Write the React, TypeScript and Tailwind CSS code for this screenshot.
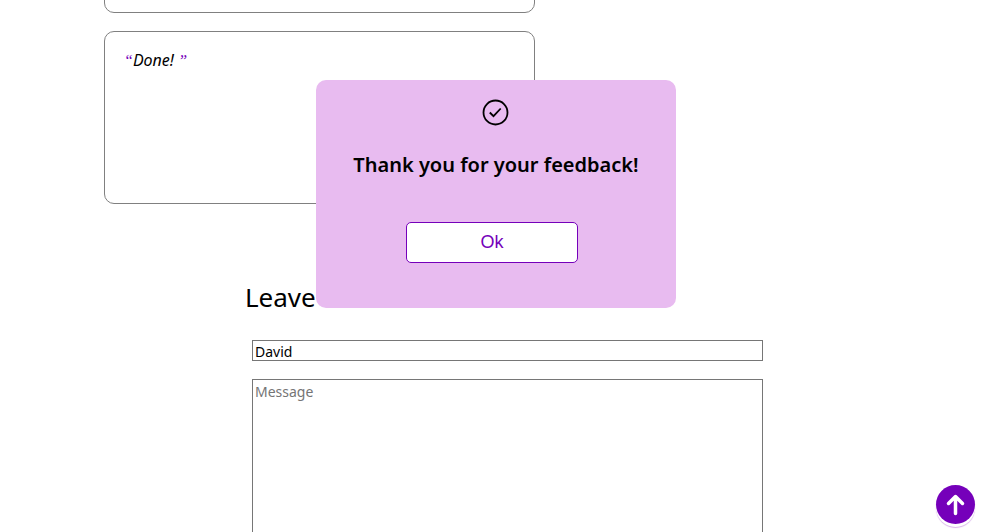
import { useState } from "react";

function ReviewCard({ text }: { text?: string }) {
  return (
    <article className="h-[173px] w-full max-w-[431px] shrink-0 rounded-[10px] border border-[#808080] bg-white px-[19px] py-[17px]">
      {text && (
        <blockquote className="text-[16px] leading-[22px] italic">
          <span className="font-['Liberation_Serif',serif] text-[#7500ba]">“</span>
          {text}
          <span className="font-['Liberation_Serif',serif] text-[#7500ba]">”</span>
        </blockquote>
      )}
    </article>
  );
}

function FeedbackForm() {
  const [name, setName] = useState("David");
  return (
    <section className="mx-auto mt-[75px] w-full max-w-[511px]">
      <h2 className="text-[26px] leading-9">Leave</h2>
      <form className="-mr-[7px] ml-[7px] mt-[25px] flex flex-col gap-[18px]">
        <input
          aria-label="Name"
          value={name}
          onChange={(e) => setName(e.target.value)}
          className="h-[21px] w-full border border-[#767676] bg-white px-0.5 pt-px text-[14px] leading-[18px] outline-none"
        />
        <textarea
          aria-label="Message"
          placeholder="Message"
          className="h-[200px] w-full resize-none border border-[#767676] bg-white px-0.5 py-0.5 text-[14px] leading-5 outline-none placeholder:text-[#757575]"
        />
      </form>
    </section>
  );
}

function ThankYouDialog({ onClose }: { onClose: () => void }) {
  return (
    <div className="fixed inset-0 flex items-start justify-center pt-20 pr-[9px]">
      <div
        role="dialog"
        aria-labelledby="thanks"
        className="flex w-full max-w-[360px] flex-col items-center rounded-[10px] bg-[#e8bbf0] pt-[19px] pb-[45px]"
      >
        <svg viewBox="0 0 28 28" className="size-7" fill="none" stroke="#000" aria-hidden="true">
          <circle cx="13.5" cy="13.5" r="12" strokeWidth="1.8" />
          <path d="M7.8 13.5l3.7 3.7 7.2-7.7" strokeWidth="1.8" />
        </svg>
        <p id="thanks" className="mt-6 text-[20px] leading-7 font-semibold whitespace-nowrap">
          Thank you for your feedback!
        </p>
        <button
          type="button"
          onClick={onClose}
          className="mt-[43px] mr-2 h-[41px] w-[172px] rounded-[5px] border border-[#7500ba] bg-white font-['Liberation_Sans',sans-serif] text-[18px] text-[#7500ba]"
        >
          Ok
        </button>
      </div>
    </div>
  );
}

export default function App() {
  const [open, setOpen] = useState(true);
  return (
    <div className="h-screen overflow-hidden bg-white font-['Noto_Sans',sans-serif] text-black">
      <main className="-mt-40">
        <section className="flex flex-col gap-[18px] px-[104px]">
          <ReviewCard />
          <ReviewCard text="Done! " />
        </section>
        <FeedbackForm />
      </main>
      {open && <ThankYouDialog onClose={() => setOpen(false)} />}
      <a
        href="#top"
        aria-label="Back to top"
        className="fixed right-[26px] bottom-2 flex size-[39px] items-center justify-center rounded-full bg-[#7500ba] shadow-[0_3px_0_#fff,0_4px_1px_#d9b3ea]"
      >
        <svg
          viewBox="0 0 24 24"
          className="size-6"
          fill="none"
          stroke="#fff"
          strokeWidth="3.5"
          strokeLinecap="round"
          strokeLinejoin="round"
          aria-hidden="true"
        >
          <path d="M11.5 20.5V3.5M4.500 10.500l7-7 7 7" />
        </svg>
      </a>
    </div>
  );
}
